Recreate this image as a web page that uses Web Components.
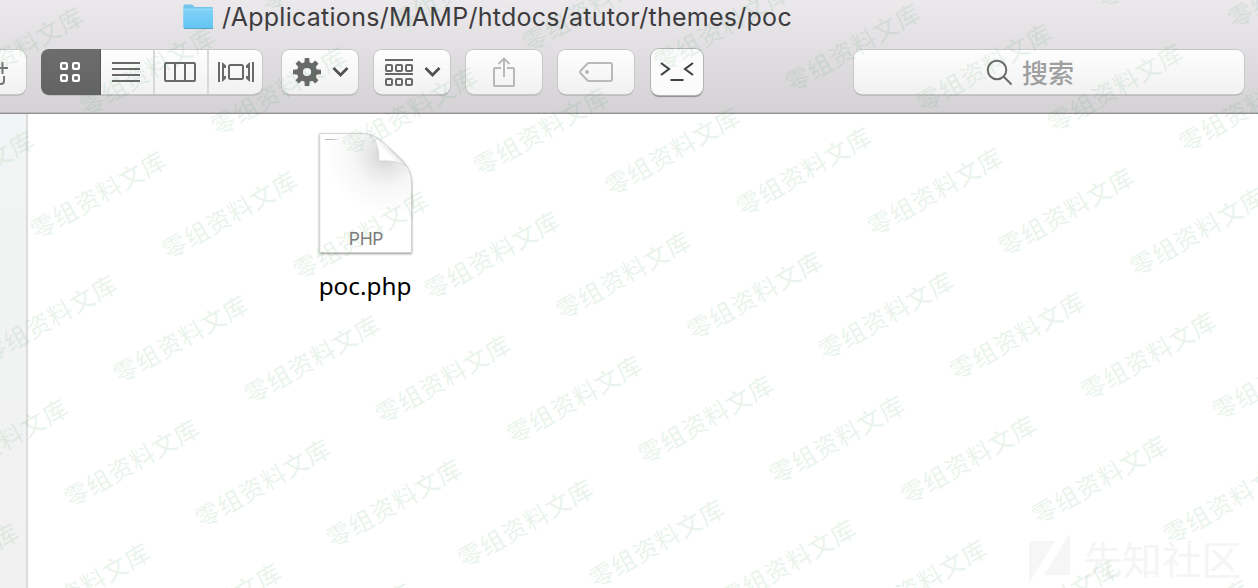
<!DOCTYPE html>
<html lang="zh">
<head>
<meta charset="utf-8">
<title>poc</title>
<style>
html,body{margin:0;height:100%;overflow:hidden;background:#fff}
</style>
</head>
<body>
<finder-window></finder-window>
<script>
const define = (name, html, setup) => {
  const t = document.createElement('template');
  t.innerHTML = html;
  customElements.define(name, class extends HTMLElement {
    constructor() {
      super();
      this.attachShadow({mode: 'open'}).append(t.content.cloneNode(true));
      if (setup) setup(this.shadowRoot, this);
    }
  });
};

const button = `background:linear-gradient(#fefefe,#f1f1f1);box-shadow:0 0 0 1px #c9c7ca,0 1.5px 0 0 #a9a7aa;border-radius:8px;`;

define('tool-button', `<style>
:host{display:flex;box-sizing:border-box;flex:none;width:76px;height:44px;align-items:center;justify-content:center;${button}}
:host([tall]){width:52px;height:46px;background:#fbfbfb;box-shadow:0 0 0 1px #b5b3b6,0 2px 1px 0 #8e8c8f}
:host([cut]){width:46px;margin-left:-20px}
</style><slot></slot>`);

define('view-switcher', `<style>
:host{display:flex;flex:none;width:220px;height:44px;overflow:clip;overflow-clip-margin:3px;${button}}
span{display:flex;align-items:center;justify-content:center;box-sizing:border-box;width:54px;border-left:2px solid #dad9da}
.on{width:60px;margin:-1px 0 -1px -1px;background:linear-gradient(#6d6d6d,#636363);border:0;border-right:1px solid #555;border-radius:8px 0 0 8px}
.list{width:52px;border:0}
svg{margin-left:-2px}
span:last-child svg{margin-left:1px}
</style>
<span class="on"><svg width="22" height="22" viewBox="0 0 22 22" fill="none" stroke="#fff" stroke-width="2.2"><rect x="2.1" y="2.1" width="5.8" height="5.8" rx="1"/><rect x="14.1" y="2.1" width="5.8" height="5.8" rx="1"/><rect x="2.1" y="14.1" width="5.8" height="5.8" rx="1"/><rect x="14.1" y="14.1" width="5.8" height="5.8" rx="1"/></svg></span>
<span class="list"><svg width="28" height="20" stroke="#696969" stroke-width="2"><path d="M0 1h28M0 7h28M0 13h28M0 19h28"/></svg></span>
<span><svg width="32" height="20" fill="none" stroke="#696969" stroke-width="2"><rect x="1" y="1" width="30" height="18" rx="1"/><path d="M11 1v18M21 1v18"/></svg></span>
<span><svg width="36" height="20" fill="none" stroke="#696969" stroke-width="2"><path d="M1 0v20M35 0v20"/><rect x="11" y="3" width="14" height="14" rx="1.500"/><path d="M4 0l4 3.500v2.500H6v8h2v2.500L4 20zM32 0l-4 3.500v2.500h2v8h-2v2.500l4 3.500z" fill="#696969" stroke="none"/></svg></span>`);

define('search-field', `<style>
:host{display:flex;flex:none;box-sizing:border-box;width:390px;height:44px;align-items:center;justify-content:center;gap:9px;padding-right:48px;${button}font:500 26px/38px "Noto Sans CJK SC",sans-serif;color:#9f9f9f}
svg{display:block;margin-left:10px}
</style><svg width="27" height="27" fill="none" stroke="#6a6a6a" stroke-width="2"><circle cx="11" cy="11" r="9.3"/><path d="M17.8 17.8l7.7 7.7"/></svg><slot></slot>`);

define('path-title', `<style>
:host{display:flex;height:34px;padding-left:183px;align-items:center;font:25px/34px Inter,sans-serif;color:#3d3b3e}
svg{display:block;flex:none;margin-right:8px}
p{margin:0;letter-spacing:.27px;white-space:nowrap}
</style><svg width="31" height="26" viewBox="0 0 31 26"><defs><linearGradient id="f" x2="0" y2="1"><stop stop-color="#80d2f8"/><stop offset="1" stop-color="#62c5f3"/></linearGradient></defs><path d="M.5 23.5V2Q.5.5 2 .5h6.5q1 0 1.6.8L11.5 3H29q1 0 1 1v19.5z" fill="#72c6ec"/><path d="M.5 5.5h29.5v18q0 1-1 1H1.5q-1 0-1-1z" fill="url(#f)"/><path d="M.5 5.2h29.5" stroke="#a2e1fb"/><path d="M1 24.5h29" stroke="#59a8cb"/></svg><p><slot></slot></p>`);

define('tool-bar', `<style>
:host{display:flex;flex-direction:column;box-sizing:border-box;height:114px;background:linear-gradient(#ebe9ec,#d4d2d5 112px);border-bottom:1px solid #929093;box-shadow:inset 0 -1px #bbb9bc}
.row{display:flex;align-items:center;height:44px;padding-top:16px}
.row>*{margin-right:16px}
.row>view-switcher{margin-right:20px}
.row>tool-button[tall]{margin-left:1px}
search-field{margin-left:135px}
svg{display:block;flex:none}
.chev{margin-left:11px}
.gear{margin-left:1px}
</style>
<path-title>/Applications/MAMP/htdocs/atutor/themes/poc</path-title>
<div class="row">
<tool-button cut><svg width="34" height="26" fill="none" stroke="#777" stroke-width="2" style="margin-right:-2px"><path d="M10 9h11M15.500 3v12M17 17v5q0 3-3 3h-5"/></svg></tool-button>
<view-switcher></view-switcher>
<tool-button><svg class="gear" width="28" height="28" viewBox="-14 -14 28 28"><g fill="#696969" id="g"></g><circle r="7.1" fill="none" stroke="#696969" stroke-width="6"/></svg><svg class="chev" width="17" height="12" fill="none" stroke="#505050" stroke-width="2.7"><path d="M1.5 2l7 7 7-7"/></svg></tool-button>
<tool-button><svg class="gear" width="28" height="28" fill="none" stroke="#696969" stroke-width="2"><path d="M0 2h28M0 16h28"/><rect x="1" y="7" width="6" height="6" rx="1"/><rect x="11" y="7" width="6" height="6" rx="1"/><rect x="21" y="7" width="6" height="6" rx="1"/><rect x="1" y="21" width="6" height="6" rx="1"/><rect x="11" y="21" width="6" height="6" rx="1"/><rect x="21" y="21" width="6" height="6" rx="1"/></svg><svg class="chev" width="17" height="12" fill="none" stroke="#505050" stroke-width="2.7"><path d="M1.5 2l7 7 7-7"/></svg></tool-button>
<tool-button><svg width="22" height="30" fill="none" stroke="#b9b9b9" stroke-width="2"><path d="M8 11H2q-1 0-1 1v16q0 1 1 1h18q1 0 1-1V12q0-1-1-1h-6M11 20V1.5M5.5 7L11 1.5 16.500 7"/></svg></tool-button>
<tool-button><svg width="34" height="20" fill="none" stroke="#b9b9b9" stroke-width="2"><path d="M10 1h21q2 0 2 2v14q0 2-2 2H10q-1 0-2-1L1.500 11q-.7-1 0-2L8 2q1-1 2-1z"/><circle cx="8" cy="10" r="2" fill="#b9b9b9" stroke="none"/></svg></tool-button>
<tool-button tall><svg width="34" height="20" fill="none" stroke="#404040" stroke-width="2.1"><path d="M1 1l8 6-8 6M33 1l-8 6 8 6M10.500 18h13"/></svg></tool-button>
<search-field>搜索</search-field>
</div>`, r => {
  r.getElementById('g').innerHTML = [0,45,90,135,180,225,270,315].map(a => `<path transform="rotate(${a})" d="M-2.700-8L-2.200-14h4.400L2.700-8z"/>`).join('');
});

define('file-item', `<style>
:host{display:flex;flex-direction:column;align-items:center;width:160px;font:24.300px/34px "Noto Sans",sans-serif;color:#000}
.doc{display:grid;width:98px;height:126px}
.doc>*{grid-area:1/1}
b{align-self:end;justify-self:center;font:17.500px/20px Inter,sans-serif;color:#7d7d7d;padding:0 0 7px 2px;letter-spacing:-.3px}
p{margin:13px 0 0;white-space:nowrap}
</style>
<div class="doc"><svg width="98" height="126" viewBox="-3 -3 98 126"><defs>
<radialGradient id="s" gradientUnits="userSpaceOnUse" cx="66" cy="22" r="60"><stop stop-color="#d0d0d0"/><stop offset=".25" stop-color="#e6e6e6"/><stop offset=".55" stop-color="#f7f7f7"/><stop offset="1" stop-color="#fff"/></radialGradient>
<linearGradient id="c" gradientUnits="userSpaceOnUse" x1="60" y1="28" x2="74" y2="15"><stop stop-color="#fff"/><stop offset=".55" stop-color="#fff"/><stop offset="1" stop-color="#e2e2e2"/></linearGradient>
<filter id="h" x="-10%" y="-10%" width="120%" height="120%"><feDropShadow dx="0" dy="1" stdDeviation="1" flood-opacity=".45"/></filter></defs>
<path d="M.8.5H42C51 .5 59 4 66 11L83 27Q92.500 37 92.500 50V119.500H.8z" fill="url(#s)" stroke="#c8c8c8" stroke-width=".7" filter="url(#h)"/>
<path d="M50 1.500Q60 6 60 28Q79 27 87 33L66 11Q58 3.500 50 1.500z" fill="url(#c)" stroke="#d0d0d0" stroke-width=".6"/>
<path d="M6 6.500h13" stroke="#bbb" stroke-dasharray="9 1 1 1"/></svg><b>PHP</b></div>
<p><slot></slot></p>`);

define('community-mark', `<style>
:host{display:flex;align-items:center;gap:12px;position:absolute;right:17px;bottom:4px;font:39.500px/52px "Noto Sans CJK SC",sans-serif;color:#f5f5f5;white-space:nowrap}
</style><svg width="42" height="50" fill="#f6f6f6"><path d="M0 8h26L0 50zM41 0v42H15z"/></svg><slot></slot>`);

define('water-mark', `<style>
:host{display:block;position:absolute;inset:0;pointer-events:none}
svg{display:block;width:100%;height:100%}
text{font:500 24.500px "Noto Sans CJK SC",sans-serif;letter-spacing:.7px;text-anchor:middle;fill:rgba(40,140,60,.09)}
</style><svg></svg>`, r => {
  let out = '';
  for (let j = -3; j < 6; j++) for (let i = -4; i < 13; i++) {
    const x = 98.4 + 131.3 * i - 49 * j, y = 195.200 + 20.1 * i + 124 * j;
    if (x > -70 && x < 1330 && y > -45 && y < 635)
      out += `<text transform="translate(${x} ${y}) rotate(-29.700)" y="9">零组资料文库</text>`;
  }
  r.querySelector('svg').innerHTML = out;
});

define('finder-window', `<style>
:host{display:flex;flex-direction:column;position:relative;width:1258px;height:588px;overflow:hidden;background:#fff}
main{display:flex;flex:1}
aside{width:26px;border-right:2px solid #dcdcdc;background:linear-gradient(#f2f5f5,#f1f3f3 35%,#f2f1f1)}
section{flex:1;padding:16px 0 0 257px}
</style>
<tool-bar></tool-bar>
<main><aside></aside><section><file-item>poc.php</file-item></section></main>
<community-mark>先知社区</community-mark>
<water-mark></water-mark>`);
</script>
</body>
</html>
